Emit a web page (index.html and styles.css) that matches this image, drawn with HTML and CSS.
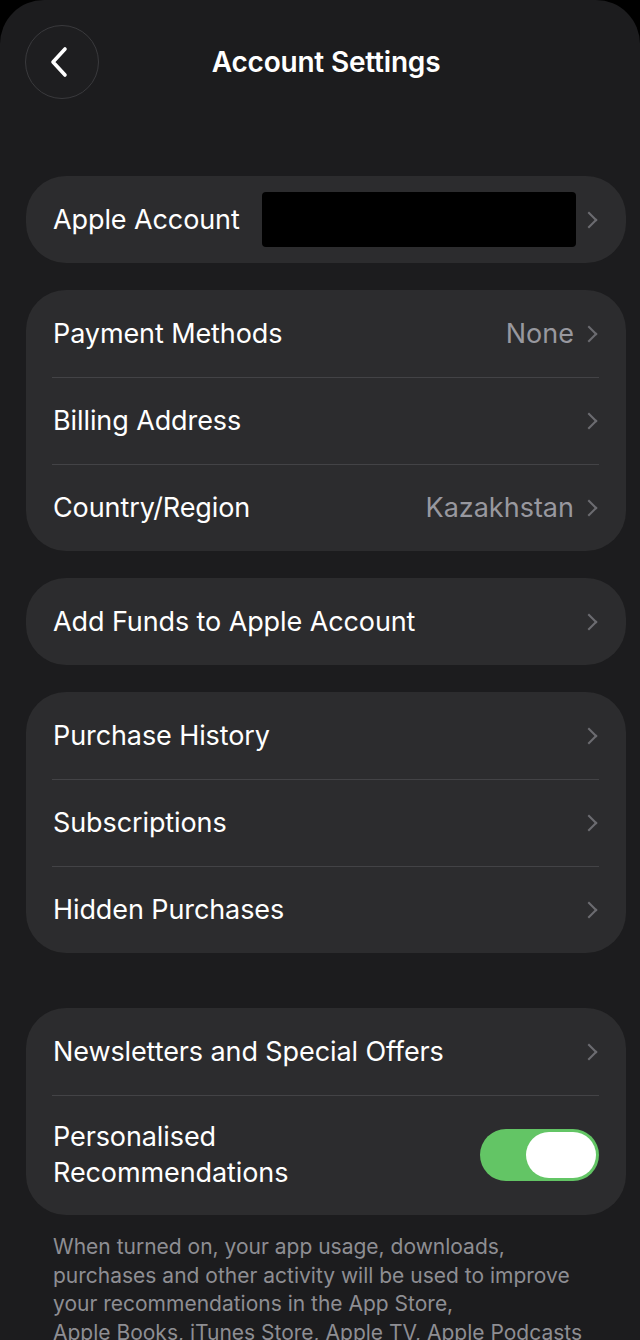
FILE: index.html
```html
<!DOCTYPE html>
<html lang="en">
<head>
  <meta charset="UTF-8" />
  <meta name="viewport" content="width=device-width, initial-scale=1.0" />
  <title>Account Settings</title>
  <link rel="stylesheet" href="styles.css">
</head>
<body>
  <div class="sheet">
    <header class="topbar">
      <button class="back" aria-label="Back">
        <svg width="22" height="32" viewBox="0 0 22 32"><path d="M17 3 L5 16 L17 29" fill="none" stroke="#fff" stroke-width="3.6" stroke-linecap="round" stroke-linejoin="round"/></svg>
      </button>
      <h1>Account Settings</h1>
      <span></span>
    </header>

    <!-- Account -->
    <div class="group">
      <div class="row">
        <span class="label">Apple Account</span>
        <span class="redacted"></span>
        <span class="chev"></span>
      </div>
    </div>

    <!-- Payment -->
    <div class="group">
      <div class="row">
        <span class="label">Payment Methods</span>
        <span class="value">None</span>
        <span class="chev"></span>
      </div>
      <div class="row">
        <span class="label">Billing Address</span>
        <span class="chev"></span>
      </div>
      <div class="row">
        <span class="label">Country/Region</span>
        <span class="value">Kazakhstan</span>
        <span class="chev"></span>
      </div>
    </div>

    <div class="group">
      <div class="row">
        <span class="label">Add Funds to Apple Account</span>
        <span class="chev"></span>
      </div>
    </div>

    <!-- Purchases -->
    <div class="group">
      <div class="row">
        <span class="label">Purchase History</span>
        <span class="chev"></span>
      </div>
      <div class="row">
        <span class="label">Subscriptions</span>
        <span class="chev"></span>
      </div>
      <div class="row">
        <span class="label">Hidden Purchases</span>
        <span class="chev"></span>
      </div>
    </div>

    <!-- Preferences -->
    <div class="group group-wide">
      <div class="row">
        <span class="label">Newsletters and Special Offers</span>
        <span class="chev"></span>
      </div>
      <div class="row row-tall">
        <span class="label">Personalised<br>Recommendations</span>
        <span class="toggle on"><span class="knob"></span></span>
      </div>
    </div>

    <p class="footnote">When turned on, your app usage, downloads, purchases and other activity will be used to improve your recommendations in the App Store, Apple&nbsp;Books, iTunes Store, Apple TV, Apple Podcasts and Apple Music.</p>
  </div>
</body>
</html>
```

FILE: styles.css
```css
body {
  margin: 0;
  background: #000;
  font-family: Inter, "Noto Sans", sans-serif;
  color: #fff;
  height: 1340px;
  overflow: hidden;
}
.sheet {
  background: #1c1c1e;
  border-radius: 44px 44px 0 0;
  min-height: 1340px;
  padding-top: 25px;
}
.topbar {
  display: grid;
  grid-template-columns: 74px 1fr 74px;
  align-items: center;
  padding: 0 25px;
  margin-bottom: 77px;
}
.back {
  width: 74px;
  height: 74px;
  border-radius: 50%;
  border: 1px solid #3a3a3d;
  background: #1e1e20;
  display: flex;
  align-items: center;
  justify-content: center;
  padding: 0 6px 0 0;
}
.topbar h1 {
  margin: 0 0 0 12px;
  text-align: center;
  font-size: 28px;
  font-weight: 600;
  letter-spacing: -0.2px;
}
.group {
  background: #2c2c2e;
  border-radius: 40px;
  margin: 0 14px 27px 26px;
}
.group-wide {
  margin-top: 55px;
  margin-bottom: 0;
}
.row {
  display: flex;
  align-items: center;
  height: 87px;
  padding: 0 27px;
  position: relative;
}
.row + .row::before {
  content: "";
  position: absolute;
  top: 0;
  left: 26px;
  right: 27px;
  height: 1px;
  background: #434346;
}
.row-tall {
  height: 120px;
}
.label {
  flex: 1;
  font-size: 27px;
  line-height: 36px;
  letter-spacing: -0.1px;
}
.value {
  font-size: 27px;
  color: #98989f;
  margin-right: 9px;
}
.redacted {
  width: 314px;
  height: 55px;
  background: #000;
  border-radius: 4px;
  margin-right: 7px;
}
.chev {
  width: 10px;
  height: 10px;
  border-top: 2.5px solid #6c6c71;
  border-right: 2.5px solid #6c6c71;
  transform: rotate(45deg);
  margin-right: 4px;
}
.toggle {
  width: 119px;
  height: 52px;
  border-radius: 26px;
  background: #63c565;
  display: flex;
  align-items: center;
  justify-content: flex-end;
  padding: 0 3px;
  box-sizing: border-box;
}
.knob {
  width: 70px;
  height: 46px;
  border-radius: 23px;
  background: #fff;
}
.footnote {
  margin: 18px 54px 0 53px;
  font-size: 21px;
  line-height: 28.5px;
  color: #8e8e93;
}
```
